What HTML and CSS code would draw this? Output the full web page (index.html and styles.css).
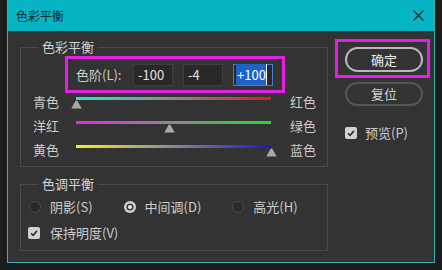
FILE: index.html
```html
<!DOCTYPE html>
<html lang="zh-CN">
<head>
    <meta charset="UTF-8">
    <title>色彩平衡</title>
    <link rel="stylesheet" href="styles.css">
</head>
<body>
    <div class="dialog">
        <div class="titlebar">
            <span class="title">色彩平衡</span>
            <svg class="close" width="11" height="11" viewBox="0 0 11 11">
                <path d="M0.5 0.5 L10.5 10.5 M10.5 0.5 L0.5 10.5" stroke="#14282b" stroke-width="1.3" fill="none"/>
            </svg>
        </div>

        <div class="dialog-body">
            <div class="left-col">
                <!-- color balance group -->
                <fieldset class="group balance">
                    <legend>色彩平衡</legend>
                    <div class="levels">
                        <span class="levels-label">色阶(L):</span>
                        <span class="field">-100</span>
                        <span class="field">-4</span>
                        <span class="field active"><span class="sel">+100</span></span>
                    </div>

                    <div class="slider-row">
                        <span class="side">青色</span>
                        <div class="slider">
                            <div class="track cyan-red"></div>
                            <svg class="thumb" style="left: 0%;" width="11" height="9" viewBox="0 0 11 9"><path d="M5.5 0.6 Q6.2 0.6 6.6 1.3 L10.7 8.6 L0.3 8.6 L4.4 1.3 Q4.8 0.6 5.5 0.6Z" fill="#a8a8a8"/></svg>
                        </div>
                        <span class="side">红色</span>
                    </div>
                    <div class="slider-row">
                        <span class="side">洋红</span>
                        <div class="slider">
                            <div class="track magenta-green"></div>
                            <svg class="thumb" style="left: 48%;" width="11" height="9" viewBox="0 0 11 9"><path d="M5.5 0.6 Q6.2 0.6 6.6 1.3 L10.7 8.6 L0.3 8.6 L4.4 1.3 Q4.8 0.6 5.5 0.6Z" fill="#a8a8a8"/></svg>
                        </div>
                        <span class="side">绿色</span>
                    </div>
                    <div class="slider-row">
                        <span class="side">黄色</span>
                        <div class="slider">
                            <div class="track yellow-blue"></div>
                            <svg class="thumb" style="left: 100%;" width="11" height="9" viewBox="0 0 11 9"><path d="M5.5 0.6 Q6.2 0.6 6.6 1.3 L10.7 8.6 L0.3 8.6 L4.4 1.3 Q4.8 0.6 5.5 0.6Z" fill="#a8a8a8"/></svg>
                        </div>
                        <span class="side">蓝色</span>
                    </div>
                </fieldset>

                <!-- tone balance group -->
                <fieldset class="group tone">
                    <legend>色调平衡</legend>
                    <div class="radio-row">
                        <label class="radio">
                            <svg width="12" height="12" viewBox="0 0 12 12"><circle cx="6" cy="6" r="5.5" fill="#2a2a2a" stroke="#4c4c4c"/></svg>
                            <span>阴影(S)</span>
                        </label>
                        <label class="radio">
                            <svg width="12" height="12" viewBox="0 0 12 12"><circle cx="6" cy="6" r="6" fill="#d2d2d2"/><circle cx="6" cy="6" r="3.6" fill="#3a3a3a"/><circle cx="6" cy="6" r="2.1" fill="#e8e8e8"/></svg>
                            <span>中间调(D)</span>
                        </label>
                        <label class="radio">
                            <svg width="12" height="12" viewBox="0 0 12 12"><circle cx="6" cy="6" r="5.5" fill="#2a2a2a" stroke="#4c4c4c"/></svg>
                            <span>高光(H)</span>
                        </label>
                    </div>
                    <label class="check keep">
                        <svg width="12" height="12" viewBox="0 0 12 12"><rect width="12" height="12" rx="2" fill="#d2d2d2"/><path d="M3 6.3 L5.1 8.3 L9 3.9" stroke="#2e2e2e" stroke-width="1.6" fill="none"/></svg>
                        <span>保持明度(V)</span>
                    </label>
                </fieldset>
            </div>

            <div class="right-col">
                <div class="ok-frame">
                    <button class="btn ok">确定</button>
                </div>
                <button class="btn reset">复位</button>
                <label class="check preview">
                    <svg width="12" height="12" viewBox="0 0 12 12"><rect width="12" height="12" rx="2" fill="#d2d2d2"/><path d="M3 6.3 L5.1 8.3 L9 3.9" stroke="#2e2e2e" stroke-width="1.6" fill="none"/></svg>
                    <span>预览(P)</span>
                </label>
            </div>
        </div>
    </div>
</body>
</html>
```

FILE: styles.css
```css
* {
    box-sizing: border-box;
}

body {
    margin: 0;
    background-color: #1c1c1c;
    font-family: "Noto Sans CJK SC", "Noto Sans", sans-serif;
    font-size: 13px;
    line-height: 16px;
    color: #cdcdcd;
}

.dialog {
    margin-left: 7px;
    width: 428px;
    height: 263px;
    border: 1px solid #3aaeb2;
    border-top: none;
    background-color: #333333;
}

.titlebar {
    height: 31px;
    background-color: #07b4c3;
    display: flex;
    align-items: center;
    justify-content: space-between;
    padding: 0 10px 0 8px;
}

.title {
    font-size: 12px;
    color: #15292c;
}

.dialog-body {
    display: flex;
    gap: 7px;
    padding: 8px 4px 0 12px;
}

.left-col {
    width: 308px;
    display: flex;
    flex-direction: column;
}

.group {
    margin: 0;
    padding: 0 0 8px 0;
    border: 1px solid #4a4a4a;
    min-width: 0;
}

.group legend {
    margin-left: 17px;
    padding: 0 4px;
    color: #d4d4d4;
}

.tone {
    margin-top: 9px;
    padding-bottom: 9px;
}

/* levels row */
.levels {
    margin: 1px 0 0 44px;
    width: 220px;
    height: 37px;
    border: 3px solid #e21fe2;
    display: flex;
    align-items: center;
    gap: 10px;
    padding-left: 8px;
}

.levels-label {
    width: 47px;
}

.field {
    width: 40px;
    height: 22px;
    background-color: #282828;
    border: 1px solid #3f3f3f;
    padding-left: 4px;
    color: #e4e4e4;
    line-height: 20px;
}

.field.active {
    border-color: #3b7fd9;
    padding-left: 2px;
}

.sel {
    background-color: #1b63c8;
    color: #ffffff;
    border-right: 1px solid #ffffff;
    padding: 1px 0 1px 1px;
}

/* sliders */
.slider-row {
    display: flex;
    align-items: center;
    height: 16px;
    margin-top: 8px;
    padding-left: 12px;
}

.levels + .slider-row {
    margin-top: 1px;
}

.side {
    width: 26px;
}

.slider {
    position: relative;
    width: 195px;
    height: 11px;
    margin: 0 19px 0 17px;
}

.track {
    height: 3px;
}

.cyan-red {
    background: linear-gradient(to right, #2fe0e0, #8a8a8a 50%, #d81c1c);
}

.magenta-green {
    background: linear-gradient(to right, #e426e4, #8a8a8a 50%, #22d82a);
}

.yellow-blue {
    background: linear-gradient(to right, #f2f226, #8a8a8a 50%, #1616d6);
}

.thumb {
    position: absolute;
    top: 3px;
    margin-left: -5.5px;
    display: block;
}

/* tone balance */
.radio-row {
    display: flex;
    gap: 31px;
    margin-top: 7px;
    padding-left: 8px;
    height: 16px;
}

.radio,
.check {
    display: flex;
    align-items: center;
    gap: 9px;
    height: 16px;
}

.keep {
    margin-top: 10px;
    padding-left: 7px;
    gap: 10px;
}

/* right column */
.right-col {
    width: 95px;
    display: flex;
    flex-direction: column;
}

.ok-frame {
    height: 39px;
    border: 3px solid #e21fe2;
    padding: 5px 4px 3px 7px;
}

.btn {
    width: 78px;
    height: 25px;
    border-radius: 13px;
    background: transparent;
    font-family: inherit;
    font-size: 13px;
    line-height: 16px;
    padding: 0;
}

.ok {
    border: 2px solid #b9b9b9;
    color: #ececec;
}

.reset {
    margin: 4px 0 0 10px;
    height: 24px;
    border: 2px solid #555555;
    color: #d2d2d2;
}

.preview {
    margin: 19px 0 0 10px;
    gap: 8px;
}
```
